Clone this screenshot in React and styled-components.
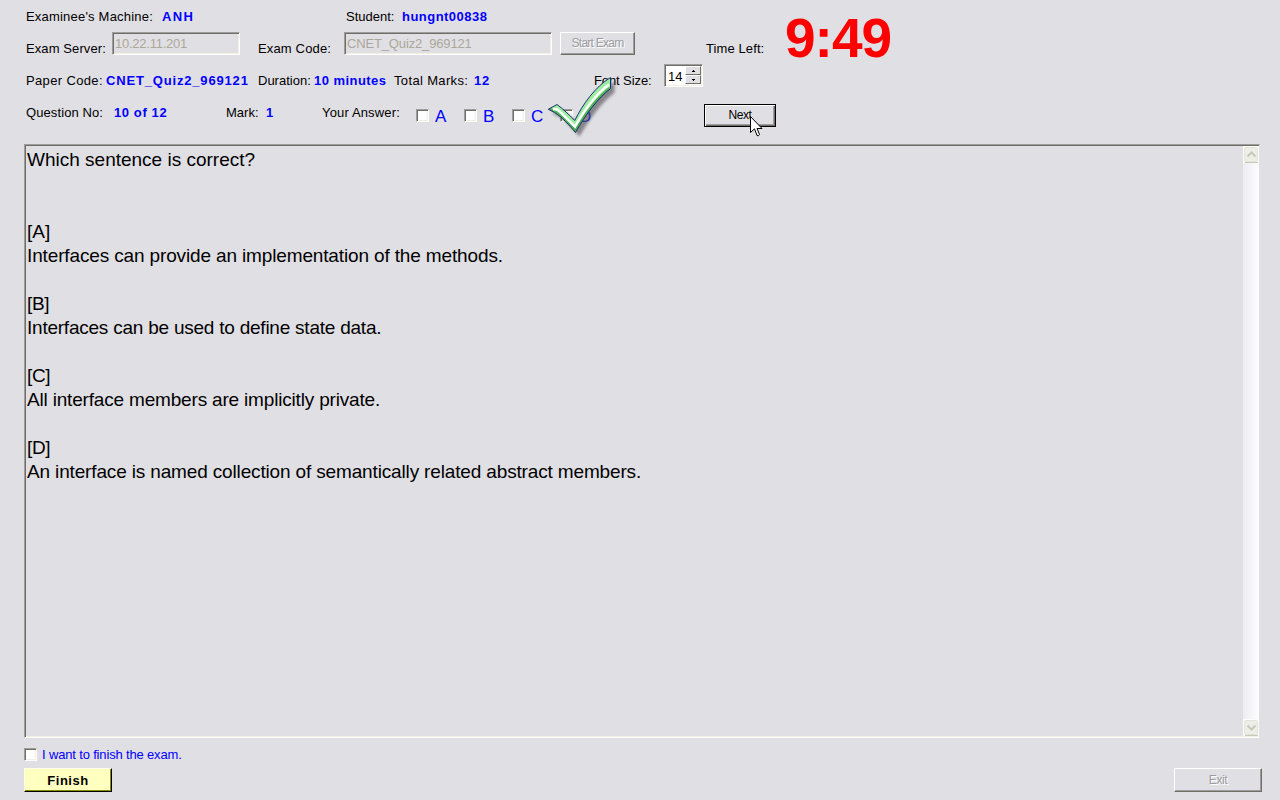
import React from 'react';
import styled, { createGlobalStyle } from 'styled-components';

const Global = createGlobalStyle`
  * { box-sizing: border-box; }
  html, body { margin: 0; padding: 0; }
  body { background: #e0dfe4; font-family: "Liberation Sans", Arial, sans-serif; font-size: 13px; color: #000; overflow: hidden; }
`;

const Screen = styled.div`
  position: relative;
  width: 1280px;
  height: 800px;
  background: #e0dfe4;
  display: flex;
  flex-direction: column;
`;

const Header = styled.header`
  display: flex;
  height: 144px;
  padding-left: 26px;
`;

const Rows = styled.div`
  width: 759px;
`;

const Row = styled.div`
  display: flex;
  height: 32px;
  align-items: flex-start;
`;

const Slot = styled.div`
  flex: none;
  width: ${p => p.$w}px;
  padding-top: ${p => p.$top || 0}px;
`;

const Label = styled.span`
  display: block;
  line-height: 16px;
  padding-top: 9px;
  white-space: nowrap;
  letter-spacing: ${p => p.$ls || 0}px;
`;

const Value = styled(Label)`
  color: #0000ff;
  font-weight: bold;
`;

const Field = styled.div`
  width: ${p => p.$w}px;
  height: 23px;
  border: 1px solid;
  border-color: #9d9da1 #fff #fff #9d9da1;
  box-shadow: inset 1px 1px #716f64, inset -1px -1px #f1efe2;
  color: #aca899;
  line-height: 21px;
  padding-left: 2px;
  letter-spacing: ${p => p.$ls || 0}px;
`;

const Button = styled.button`
  font: 12px "Liberation Sans", Arial, sans-serif;
  letter-spacing: ${p => p.$ls || 0}px;
  width: ${p => p.$w}px;
  height: ${p => p.$h || 23}px;
  padding: 0 0 1px;
  border: 1px solid;
  border-color: #fff #716f64 #716f64 #fff;
  box-shadow: inset -1px -1px #9d9da1;
  background: #e0dfe4;
  color: #000;
`;

const DisabledButton = styled(Button)`
  color: #9d9da1;
  text-shadow: 1px 1px #fff;
`;

const DefaultButton = styled(Button)`
  border-color: #000;
  box-shadow: inset 1px 1px #fff, inset -1px -1px #716f64, inset -2px -2px #9d9da1;
`;

const FinishButton = styled(Button)`
  font-weight: bold;
  font-size: 13px;
  padding: 0;
  background: #ffffc0;
  border-color: #ffffe8 #000 #000 #ffffe8;
  box-shadow: inset -1px -1px #8c8c00;
`;

const Clock = styled.div`
  font-size: 55px;
  line-height: 62px;
  padding-top: 7px;
  font-weight: bold;
  color: #ff0000;
  letter-spacing: -1px;
`;

const Check = styled.span`
  display: block;
  flex: none;
  width: 13px;
  height: 13px;
  background: #fff;
  border: 1px solid;
  border-color: #9d9da1 #fff #fff #9d9da1;
  box-shadow: inset 1px 1px #716f64, inset -1px -1px #f1efe2;
`;

const Choice = styled.div`
  display: flex;
  flex: none;
  width: 48px;
  padding-top: 13px;
  gap: 6px;
`;

const ChoiceLetter = styled.span`
  color: #0000ff;
  font-size: 17px;
  line-height: 15px;
`;

const Spinner = styled(Field)`
  display: flex;
  background: #fff;
  color: #000;
  padding: 1px 1px 1px 3px;
  justify-content: space-between;
`;

const Arrows = styled.div`
  display: flex;
  flex-direction: column;
  width: 16px;
`;

const Arrow = styled.div`
  height: 9px;
  background: #e0dfe4;
  border: 1px solid;
  border-color: #fff #716f64 #716f64 #fff;
  display: flex;
  align-items: center;
  justify-content: center;
`;

const Paper = styled.main`
  display: flex;
  justify-content: space-between;
  width: 1236px;
  height: 594px;
  margin-left: 24px;
  border: 1px solid;
  border-color: #9d9da1 #e0dfe4 #fff #9d9da1;
  box-shadow: inset 1px 1px #716f64, inset 0 -1px #f1efe2;
  padding: 1px 0 1px 1px;
`;

const Question = styled.div`
  font-size: 19px;
  line-height: 24px;
  padding-left: 1px;
  padding-top: 2px;
`;

const Line = styled.div`
  height: 24px;
  white-space: nowrap;
  letter-spacing: ${p => p.$ls || 0}px;
`;

const ScrollBar = styled.div`
  width: 16px;
  display: flex;
  flex-direction: column;
  justify-content: space-between;
  background: linear-gradient(90deg, #ededf2, #fdfdff);
`;

const Footer = styled.footer`
  display: flex;
  justify-content: space-between;
  padding: 10px 18px 0 24px;
  height: 62px;
`;

const FinishLine = styled.div`
  display: flex;
  gap: 5px;
  height: 20px;
  color: #0000ff;
  white-space: nowrap;
  line-height: 13px;
  letter-spacing: -0.16px;
`;

const ExitSlot = styled.div`
  padding-top: 20px;
`;

const Mark = styled.svg`
  position: absolute;
  left: 540px;
  top: 70px;
`;

const Pointer = styled.svg`
  position: absolute;
  left: 750px;
  top: 116px;
`;

const ScrollButton = ({ down }) => (
  <svg width="16" height="17" viewBox="0 0 16 17">
    <rect width="16" height="17" fill="#fdfdfb" />
    <rect x="1.5" y="1.5" width="13" height="14" rx="1.5" fill="#eeeee8" stroke="#e4e3d8" />
    <path d="M2 16.5H15" stroke="#c9c7ba" />
    <path d={down ? 'M4.5 6.5L8.5 10.5L12.5 6.5' : 'M4.5 10.5L8.5 6.5L12.5 10.5'} fill="none" stroke="#c9c7ba" strokeWidth="2" />
  </svg>
);

const tick = 'M8.3 39.3L17 34.5C23 39 29 44.500 34.7 50.5C43 34 55 17 70.5 7.5V18.700C58 28 46 44 35.500 62.5C29 55 22 47 14.500 42.500Z';

const lines = [
  ['Which sentence is correct?', 0], ['', 0], ['', 0],
  ['[A]', 0], ['Interfaces can provide an implementation of the methods.', -0.14], ['', 0],
  ['[B]', -0.4], ['Interfaces can be used to define state data.', -0.23], ['', 0],
  ['[C]', -0.4], ['All interface members are implicitly private.', -0.18], ['', 0],
  ['[D]', -0.4], ['An interface is named collection of semantically related abstract members.', -0.15],
];

export default function App() {
  return (
    <Screen>
      <Global />
      <Header>
        <Rows>
          <Row>
            <Slot $w={136}><Label $ls={0.2}>Examinee's Machine:</Label></Slot>
            <Slot $w={184}><Value $ls={1.3}>ANH</Value></Slot>
            <Slot $w={56}><Label>Student:</Label></Slot>
            <Slot $w={120}><Value $ls={0.47}>hungnt00838</Value></Slot>
          </Row>
          <Row>
            <Slot $w={86}><Label $ls={0.1}>Exam Server:</Label></Slot>
            <Slot $w={146}><Field $w={128} $ls={-0.25}>10.22.11.201</Field></Slot>
            <Slot $w={86}><Label $ls={0.15}>Exam Code:</Label></Slot>
            <Slot $w={216}><Field $w={208} $ls={-0.15}>CNET_Quiz2_969121</Field></Slot>
            <Slot $w={146}><DisabledButton $w={75} $ls={-0.75}>Start Exam</DisabledButton></Slot>
            <Slot $w={70}><Label $ls={0.1}>Time Left:</Label></Slot>
          </Row>
          <Row>
            <Slot $w={80}><Label $ls={0.35}>Paper Code:</Label></Slot>
            <Slot $w={152}><Value $ls={0.83}>CNET_Quiz2_969121</Value></Slot>
            <Slot $w={56}><Label>Duration:</Label></Slot>
            <Slot $w={80}><Value $ls={0.45}>10 minutes</Value></Slot>
            <Slot $w={80}><Label $ls={0.35}>Total Marks:</Label></Slot>
            <Slot $w={120}><Value $ls={0.8}>12</Value></Slot>
            <Slot $w={70}><Label $ls={-0.1}>Font Size:</Label></Slot>
            <Spinner $w={39}>
              14
              <Arrows>
                <Arrow><svg width="3" height="2"><path d="M1 0h1v1h1v1H0V1h1z" /></svg></Arrow>
                <Arrow><svg width="3" height="2"><path d="M0 0h3v1H2v1H1V1H0z" /></svg></Arrow>
              </Arrows>
            </Spinner>
          </Row>
          <Row>
            <Slot $w={88}><Label $ls={0.1}>Question No:</Label></Slot>
            <Slot $w={112}><Value $ls={0.6}>10 of 12</Value></Slot>
            <Slot $w={40}><Label>Mark:</Label></Slot>
            <Slot $w={56}><Value>1</Value></Slot>
            <Slot $w={94}><Label $ls={0.15}>Your Answer:</Label></Slot>
            {['A', 'B', 'C', 'D'].map(l => (
              <Choice key={l}><Check /><ChoiceLetter>{l}</ChoiceLetter></Choice>
            ))}
            <Slot $w={96} />
            <Slot $w={72} $top={8}><DefaultButton $w={72} $ls={-0.4}>Next</DefaultButton></Slot>
          </Row>
        </Rows>
        <Clock>9:49</Clock>
      </Header>
      <Paper>
        <Question>
          {lines.map(([t, ls], i) => <Line key={i} $ls={ls}>{t}</Line>)}
        </Question>
        <ScrollBar><ScrollButton /><ScrollButton down /></ScrollBar>
      </Paper>
      <Footer>
        <div>
          <FinishLine><Check /><span>I want to finish the exam.</span></FinishLine>
          <FinishButton $w={88} $h={24} $ls={0.5}>Finish</FinishButton>
        </div>
        <ExitSlot><DisabledButton $w={88} $h={24} $ls={-0.4}>Exit</DisabledButton></ExitSlot>
      </Footer>
      <Mark width="84" height="74" viewBox="0 0 84 74">
        <defs>
          <filter id="soft" x="-20%" y="-20%" width="150%" height="150%"><feGaussianBlur stdDeviation="1.6" /></filter>
          <filter id="glow"><feGaussianBlur stdDeviation="0.5" /></filter>
          <clipPath id="tickClip"><path d={tick} /></clipPath>
        </defs>
        <path d={tick} transform="translate(4 4)" fill="#55555c" opacity="0.65" filter="url(#soft)" />
        <path d={tick} fill="#9bee9f" />
        <g clipPath="url(#tickClip)">
          <path d="M8.3 39.3L14.500 42.500C22 47 29 55 35.500 62.500C46 44 58 28 70.500 18.700" fill="none" stroke="#4fae58" strokeWidth="4.500" filter="url(#glow)" />
          <path d="M13 39L17.500 39.500L35 56.500C45 39 56 24 69 14.500" fill="none" stroke="#fff" strokeWidth="2.4" filter="url(#glow)" />
        </g>
        <path d={tick} fill="none" stroke="#1c2c6e" strokeWidth="1" strokeLinejoin="round" />
      </Mark>
      <Pointer width="13" height="21" viewBox="0 0 13 21">
        <path d="M.5 .5V16.5L4.5 12.8L7 19.5Q8.5 20.5 9.5 18.5L7 12.5H12Z" fill="#fff" stroke="#000" />
      </Pointer>
    </Screen>
  );
}
